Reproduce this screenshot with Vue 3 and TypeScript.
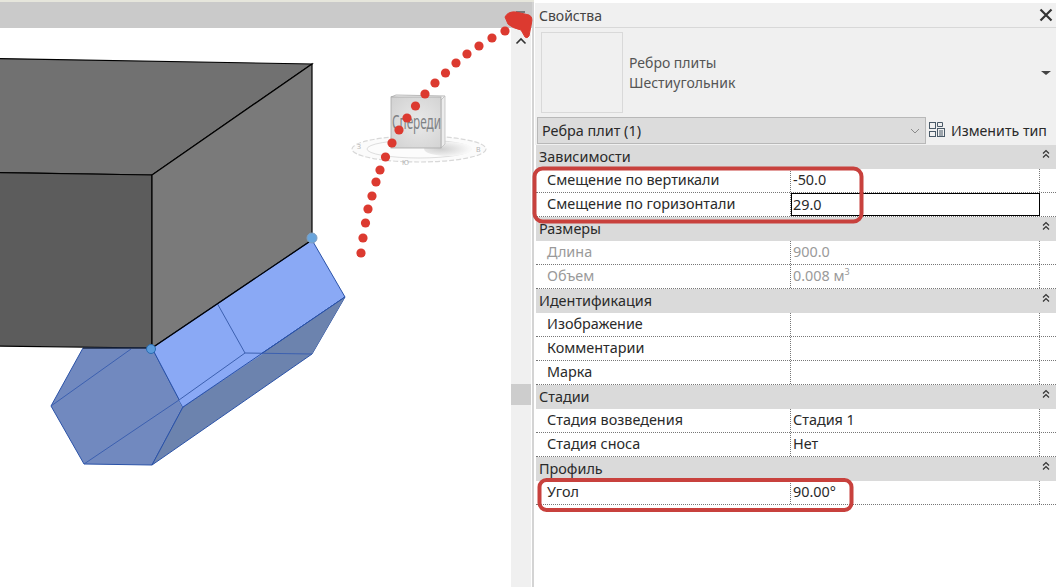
<script setup lang="ts">
interface PropRow {
  label: string
  value?: string
  sup?: string
  muted?: boolean
  editing?: boolean
}

interface Section {
  title: string
  rows: PropRow[]
}

const sections: Section[] = [
  {
    title: 'Зависимости',
    rows: [
      { label: 'Смещение по вертикали', value: '-50.0' },
      { label: 'Смещение по горизонтали', value: '29.0', editing: true }
    ]
  },
  {
    title: 'Размеры',
    rows: [
      { label: 'Длина', value: '900.0', muted: true },
      { label: 'Объем', value: '0.008 м', sup: '3', muted: true }
    ]
  },
  {
    title: 'Идентификация',
    rows: [{ label: 'Изображение' }, { label: 'Комментарии' }, { label: 'Марка' }]
  },
  {
    title: 'Стадии',
    rows: [
      { label: 'Стадия возведения', value: 'Стадия 1' },
      { label: 'Стадия сноса', value: 'Нет' }
    ]
  },
  {
    title: 'Профиль',
    rows: [{ label: 'Угол', value: '90.00°' }]
  }
]

// red dots of the annotation arrow
const dots: [number, number][] = [
  [361, 253], [363, 238], [365.5, 223], [368, 209], [372, 196], [376, 182], [380, 170],
  [385.5, 157], [392, 143], [399, 130], [407, 118], [415.5, 106], [425, 94], [435, 83],
  [445.5, 73], [456, 63], [467, 54], [479, 46], [492, 38], [505, 31]
]
</script>

<template>
  <div class="app">
    <div class="viewport">
      <div class="view-title">
        <span class="view-menu"></span>
      </div>
      <div class="view-body">
        <div class="canvas">
          <svg class="model" width="511" height="559" viewBox="0 28 511 559">
            <defs>
              <radialGradient id="cubeFace" cx="0.55" cy="0.5" r="0.7">
                <stop offset="0" stop-color="#e9e9e9" />
                <stop offset="1" stop-color="#d2d2d2" />
              </radialGradient>
              <radialGradient id="cubeShadow" cx="0.35" cy="0.5" r="0.6">
                <stop offset="0" stop-color="#cfcfcf" />
                <stop offset="1" stop-color="#f8f8f8" />
              </radialGradient>
            </defs>
            <!-- box -->
            <polygon points="-3,58.5 312,64 152,175 -3,172.5" fill="#717171" stroke="#000" stroke-width="1.2" />
            <polygon points="-3,172.5 152,175 152,348 -3,346" fill="#5c5c5c" stroke="#000" stroke-width="1.2" />
            <polygon points="312,64 152,175 152,348 312,240" fill="#7a7a7a" stroke="#000" stroke-width="1.2" />
            <!-- rib -->
            <polygon points="83,348 152,348 183,407 152,465 84,464 51,406" fill="#7189bf" stroke="#2a52a8" stroke-width="1" />
            <polygon points="312,240 345,297 183,407 152,348" fill="#8aa9f5" stroke="#2a52a8" stroke-width="1" />
            <polygon points="345,297 312,354 152,465 183,407" fill="#6c83ae" stroke="#2a52a8" stroke-width="1" />
            <polygon points="245,353 264,353 183,407 179,400" fill="#8aa9f5" />
            <polygon points="264,353 312,354 345,297" fill="#6c83ae" />
            <g fill="none" stroke="#3c60b0" stroke-width="1">
              <line x1="51" y1="406" x2="131" y2="349" />
              <line x1="84" y1="464" x2="179" y2="400" />
              <line x1="217" y1="303" x2="245" y2="353" />
              <line x1="245" y1="353" x2="312" y2="354" />
              <line x1="245" y1="353" x2="179" y2="400" />
              <line x1="183" y1="407" x2="345" y2="297" stroke="#2a52a8" />
            </g>
            <line x1="152" y1="348" x2="312" y2="240" stroke="#000" stroke-width="1.2" />
            <line x1="83" y1="348" x2="152" y2="348" stroke="#111" stroke-width="1.2" />
            <circle cx="151" cy="349" r="4.5" fill="#5a9bdc" stroke="#2a6cb0" />
            <circle cx="312" cy="238" r="5" fill="#6aa5dc" stroke="#7f9fc0" />
            <!-- view cube -->
            <ellipse cx="419" cy="149" rx="67" ry="13" fill="#fbfbfb" stroke="#d8d8d8" stroke-width="1.2" stroke-dasharray="5 2" />
            <ellipse cx="419" cy="149" rx="52" ry="9" fill="#fcfcfc" stroke="#dedede" />
            <ellipse cx="448" cy="149" rx="24" ry="7" fill="url(#cubeShadow)" />
            <polygon points="391,97 396,95 445,96 441,100" fill="#f4f4f4" stroke="#a8a8a8" stroke-width=".8" />
            <polygon points="441,100 445,96 445,144 441,148" fill="#ececec" stroke="#c0c0c0" stroke-width=".8" />
            <rect x="391" y="97" width="50" height="51" fill="url(#cubeFace)" stroke="#a8a8a8" stroke-width=".8" />
            <text x="392" y="129" class="cube-label" textLength="49" lengthAdjust="spacingAndGlyphs">Спереди</text>
            <text x="357" y="149" class="ring-label">З</text>
            <text x="476" y="152" class="ring-label">В</text>
            <text x="402" y="165" class="ring-label">Ю</text>
          </svg>
        </div>
        <div class="scrollbar">
          <svg class="scroll-up" width="12" height="8" viewBox="0 0 12 8">
            <path d="M1.5 6.5 L6 2 L10.5 6.5" fill="none" stroke="#333" stroke-width="1.6" />
          </svg>
          <div class="scroll-thumb"></div>
        </div>
      </div>
    </div>

    <div class="splitter"></div>

    <aside class="panel">
      <div class="panel-title">
        <span>Свойства</span>
        <svg width="14" height="14" viewBox="0 0 14 14">
          <path d="M1.5 1.5 L12.5 12.5 M12.5 1.5 L1.5 12.5" stroke="#333" stroke-width="2.2" fill="none" />
        </svg>
      </div>

      <div class="type-row">
        <div class="thumb"></div>
        <div class="type-name">
          <div>Ребро плиты</div>
          <div>Шестиугольник</div>
        </div>
        <span class="type-caret"></span>
      </div>

      <div class="filter-row">
        <div class="filter-select">
          <span>Ребра плит (1)</span>
          <svg width="10" height="6" viewBox="0 0 10 6">
            <path d="M1 1 L5 5 L9 1" fill="none" stroke="#8a8a8a" stroke-width="1" />
          </svg>
        </div>
        <div class="edit-type">
          <svg width="16" height="16" viewBox="0 0 16 16" fill="none" stroke="#4a5a68" stroke-width="1">
            <rect x="0.5" y="0.5" width="6" height="6" />
            <rect x="0.5" y="9.5" width="6" height="5" />
            <path d="M8.5 0.5 H13.5 V4.5 H8.5 Z" />
            <rect x="8.5" y="6.5" width="7" height="8" />
            <path d="M10 9 H14 M10 11 H14 M10 13 H14" />
          </svg>
          <span>Изменить тип</span>
        </div>
      </div>

      <div class="table">
        <template v-for="section in sections" :key="section.title">
          <div class="section-head">
            <span>{{ section.title }}</span>
            <svg width="8" height="10" viewBox="0 0 8 10" fill="none" stroke="#333" stroke-width="1.2">
              <path d="M1 4.5 L4 1.5 L7 4.5 M1 8.5 L4 5.5 L7 8.5" />
            </svg>
          </div>
          <div
            v-for="row in section.rows"
            :key="row.label"
            class="prop-row"
            :class="{ muted: row.muted }"
          >
            <div class="cell-label">{{ row.label }}</div>
            <div class="cell-value" :class="{ editing: row.editing }">
              {{ row.value }}<sup v-if="row.sup">{{ row.sup }}</sup>
            </div>
            <div class="cell-end"></div>
          </div>
        </template>
      </div>
    </aside>

    <!-- annotations drawn over the screenshot -->
    <svg class="marks" width="1056" height="587" viewBox="0 0 1056 587">
      <circle v-for="(d, i) in dots" :key="i" :cx="d[0]" :cy="d[1]" r="4.6" fill="#dc3a30" />
      <path d="M505 17 Q508 11 516 12 L529 15 Q533 17 531.5 23 L529 36 Q527 39 525 37 L521 30 Q512 28 508 24 Z" fill="#dc3a30" stroke="#dc3a30" stroke-width="1" stroke-linejoin="round" />
      <rect x="534.5" y="168.5" width="327" height="53" rx="8" fill="none" stroke="#c8413d" stroke-width="4" />
      <rect x="539.5" y="480" width="312" height="30" rx="7" fill="none" stroke="#c8413d" stroke-width="4" />
    </svg>
  </div>
</template>

<style scoped>
.app {
  position: relative;
  display: flex;
  width: 1056px;
  height: 587px;
  overflow: hidden;
  background: #fff;
  font-family: "Noto Sans", "Open Sans", sans-serif;
  font-size: 14.4px;
  color: #2a2a2a;
}

.viewport {
  display: flex;
  flex-direction: column;
  width: 532px;
}

.view-title {
  position: relative;
  height: 26px;
  flex: none;
  background: #cacaca;
  border-top: 2px solid #e6e6dc;
}

.view-menu {
  position: absolute;
  left: 516px;
  top: 9px;
  width: 9px;
  height: 2px;
  background: #777;
}

.view-body {
  flex: 1;
  display: flex;
  min-height: 0;
}

.canvas {
  width: 511px;
  background: #fff;
}

.model {
  display: block;
}

.cube-label {
  font-size: 19px;
  fill: #7f8285;
}

.ring-label {
  font-size: 7px;
  fill: #b5b5b5;
}

.scrollbar {
  width: 20px;
  background: #f0f0f0;
  display: flex;
  flex-direction: column;
  align-items: center;
  padding-top: 9px;
  box-sizing: border-box;
}

.scroll-up {
  display: block;
}

.scroll-thumb {
  width: 20px;
  height: 21px;
  margin-top: 339px;
  background: #cdcdcd;
}

.splitter {
  width: 2px;
  background: #d4d4d4;
  margin-right: 1px;
  border-top: 2px solid #e6e6dc;
}

.panel {
  flex: 1;
  display: flex;
  flex-direction: column;
  background: #fff;
  border-left: 0;
  min-width: 0;
}

.panel-title {
  height: 24px;
  flex: none;
  margin-top: 3px;
  padding: 0 3px 0 4px;
  display: flex;
  align-items: center;
  justify-content: space-between;
  background: #f0f0f0;
  border-bottom: 1px solid #d8d8d8;
  color: #444;
  font-size: 14px;
}

.type-row {
  height: 89px;
  flex: none;
  display: flex;
  align-items: center;
  background: #f0f0f0;
  padding: 0 5px 0 6px;
  box-sizing: border-box;
}

.thumb {
  width: 82px;
  height: 81px;
  box-sizing: border-box;
  border: 1px solid #d9d9d9;
  background: #f0f0f0;
}

.type-name {
  margin-left: 6px;
  flex: 1;
  line-height: 20px;
  color: #555;
  font-size: 14px;
}

.type-caret {
  width: 0;
  height: 0;
  border-left: 5px solid transparent;
  border-right: 5px solid transparent;
  border-top: 4px solid #444;
}

.filter-row {
  height: 28px;
  flex: none;
  display: flex;
  align-items: flex-start;
  background: #f0f0f0;
  padding-left: 2px;
  box-sizing: border-box;
}

.filter-select {
  width: 389px;
  height: 27px;
  box-sizing: border-box;
  display: flex;
  align-items: center;
  justify-content: space-between;
  padding: 0 5px 0 4px;
  background: #dcdcdc;
  border: 1px solid #b8b8b8;
}

.edit-type {
  display: flex;
  align-items: center;
  gap: 6px;
  height: 26px;
  margin-left: 3px;
  font-size: 14.2px;
}

.table {
  margin-left: 1px;
}

.section-head {
  height: 24px;
  padding: 0 6px 2px 3px;
  display: flex;
  align-items: center;
  justify-content: space-between;
  background: #dadada;
  box-sizing: border-box;
}

.section-head svg {
  margin-bottom: 5px;
}

.prop-row {
  height: 24px;
  display: grid;
  grid-template-columns: 255px 249px 1fr;
  box-sizing: border-box;
  border-bottom: 1px dotted #777;
  background: #fff;
}

.muted {
  color: #9a9a9a;
}

.cell-label {
  padding-left: 11px;
  line-height: 22px;
  border-right: 1px dotted #777;
}

.cell-value {
  padding-left: 2px;
  line-height: 22px;
  border-right: 1px dotted #777;
}

.cell-value sup {
  font-size: 9px;
  line-height: 0;
}

.editing {
  border: 1px solid #000;
  padding-left: 1px;
  line-height: 21px;
}
</style>

<style>
.marks {
  position: absolute;
  left: 0;
  top: 0;
  pointer-events: none;
}
</style>
